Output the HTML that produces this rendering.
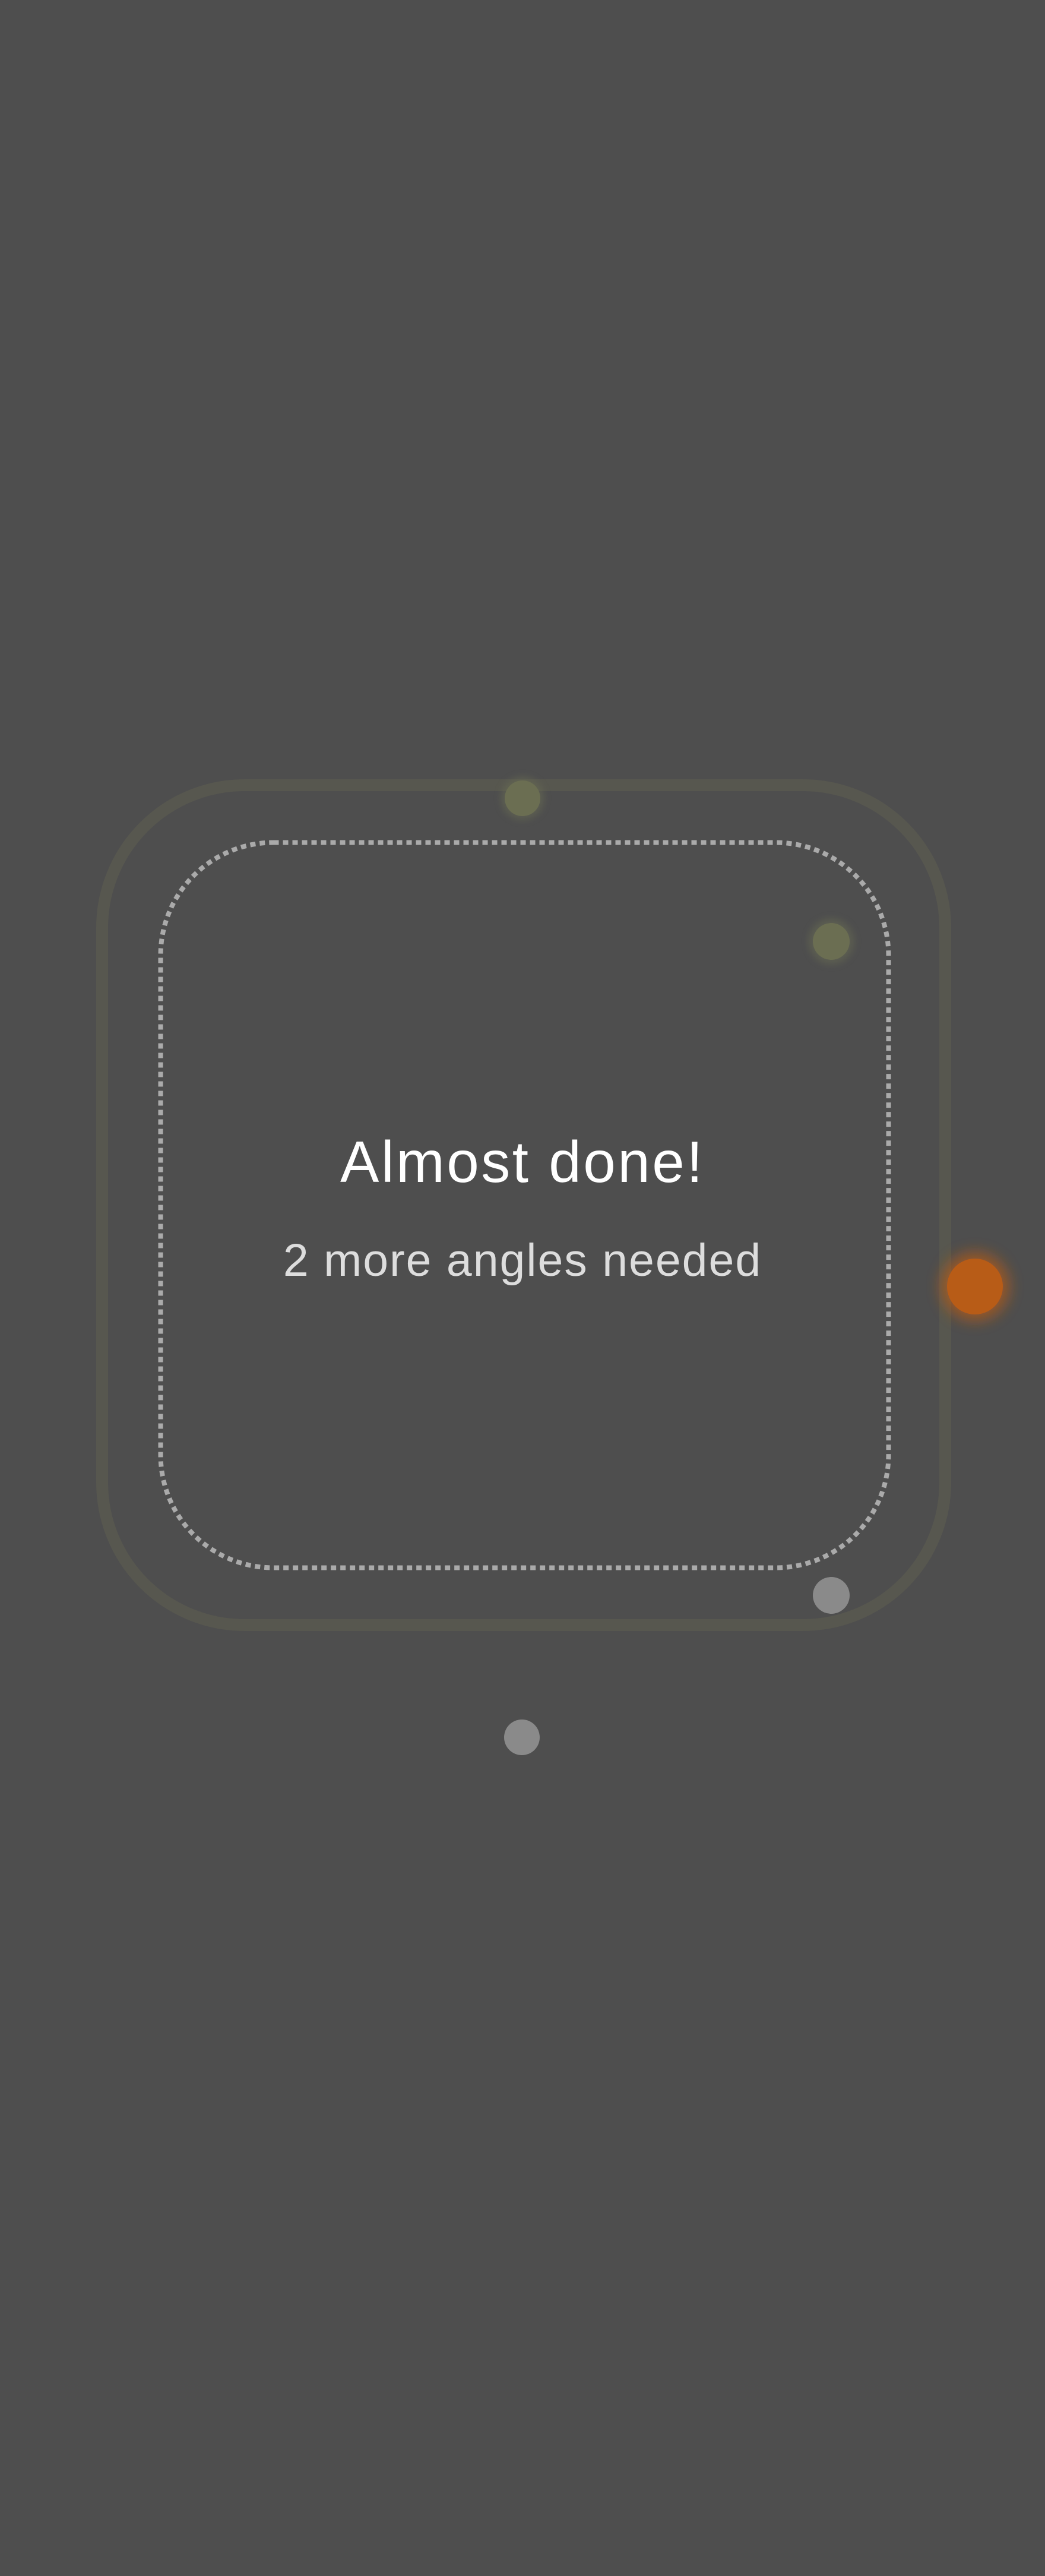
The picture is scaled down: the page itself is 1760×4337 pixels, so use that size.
<!DOCTYPE html>
<html><head><meta charset="utf-8"><style>
html,body{margin:0;padding:0;background:#4e4e4e;}
body{width:1760px;height:4332px;overflow:hidden;}
</style></head><body>
<svg width="1760" height="4332" viewBox="0 0 1760 4332" xmlns="http://www.w3.org/2000/svg">
<defs>
<filter id="glow" x="-100%" y="-100%" width="300%" height="300%"><feGaussianBlur stdDeviation="12"/></filter>
<filter id="soft" x="-100%" y="-100%" width="300%" height="300%"><feGaussianBlur stdDeviation="6"/></filter>
</defs>
<rect x="0" y="0" width="1760" height="4332" fill="#4e4e4e"/>
<rect x="172" y="1322" width="1420" height="1414" rx="240" ry="240" fill="none" stroke="#57574f" stroke-width="20"/>
<rect x="270.5" y="1418.5" width="1226" height="1221" rx="190" ry="190" fill="none" stroke="#aaaaaa" stroke-width="8" stroke-dasharray="9 7"/>
<circle cx="880" cy="1344" r="36" fill="#6b6e52" opacity="0.5" filter="url(#soft)"/>
<circle cx="880" cy="1344" r="30" fill="#6b6e52"/>
<circle cx="1400" cy="1585" r="38" fill="#6b6e52" opacity="0.5" filter="url(#soft)"/>
<circle cx="1400" cy="1585" r="31" fill="#6b6e52"/>
<circle cx="1400" cy="2686" r="31" fill="#8a8a8a"/>
<circle cx="1642" cy="2166" r="58" fill="#b85c17" opacity="0.7" filter="url(#glow)"/>
<circle cx="1642" cy="2166" r="47" fill="#b85c17"/>
<circle cx="879" cy="2925" r="30" fill="#8a8a8a"/>
<text x="880" y="1990" text-anchor="middle" font-family="Liberation Sans, sans-serif" font-size="98" letter-spacing="3.5" fill="#ffffff">Almost done!</text>
<text x="880" y="2148" text-anchor="middle" font-family="Liberation Sans, sans-serif" font-size="77" letter-spacing="2" fill="#dddddd">2 more angles needed</text>
</svg>
</body></html>
